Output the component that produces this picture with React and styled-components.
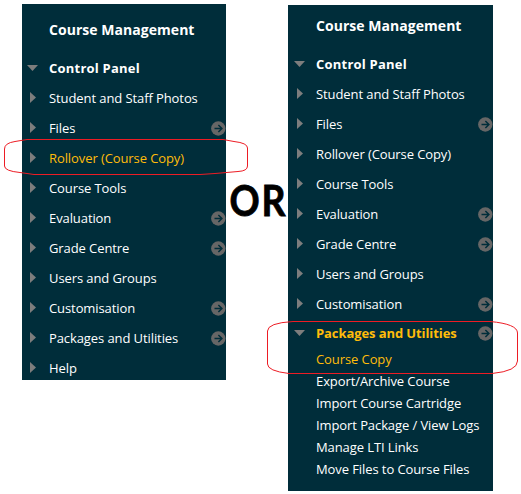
import React from 'react';
import styled, { createGlobalStyle } from 'styled-components';

const GlobalStyle = createGlobalStyle`
  body {
    margin: 0;
    background-color: #fff;
  }
`;

const AppContainer = styled.div`
  position: relative;
  box-sizing: border-box;
  width: 521px;
  height: 494px;
  padding: 4px 0 0 22px;
  display: flex;
  align-items: flex-start;
  overflow: hidden;
  font-family: 'Open Sans', 'Noto Sans', sans-serif;
`;

const Panel = styled.nav`
  box-sizing: border-box;
  flex: none;
  width: ${(props) => props.$width}px;
  height: ${(props) => props.$height}px;
  margin-top: ${(props) => props.$top || 0}px;
  padding-left: ${(props) => props.$indent}px;
  background-color: #002d3a;
  color: #fff;
  overflow: hidden;
`;

const PanelTitle = styled.h2`
  height: ${(props) => props.$height}px;
  margin: 0 0 0 22px;
  padding-bottom: 13px;
  box-sizing: border-box;
  display: flex;
  align-items: flex-end;
  font-size: 14px;
  font-weight: 700;
  letter-spacing: 0.04px;
  line-height: 20px;
  white-space: nowrap;
`;

const MenuRow = styled.div`
  height: ${(props) => props.$height || 30}px;
  display: flex;
  align-items: center;
  color: ${(props) => (props.$active ? '#ffbc0a' : '#fff')};
  font-size: 13px;
  font-weight: ${(props) => (props.$bold ? 700 : 400)};
  letter-spacing: ${(props) => props.$spacing ?? -0.09}px;
`;

const ArrowBox = styled.span`
  width: 22px;
  height: 12px;
  flex: none;
  display: flex;
  align-items: center;
`;

const Label = styled.span`
  flex: 1;
  line-height: 18px;
  white-space: nowrap;
`;

const SubList = styled.ul`
  list-style: none;
  margin: 0;
  padding: 1px 0 0 22px;
`;

const SubItem = styled.li`
  height: 22px;
  line-height: 22px;
  font-size: 13px;
  letter-spacing: -0.09px;
  white-space: nowrap;
  color: ${(props) => (props.$active ? '#ffbc0a' : '#fff')};
`;

const OrBox = styled.div`
  flex: none;
  width: 62px;
  padding-top: 166px;
  display: flex;
  justify-content: center;
`;

const OrText = styled.span`
  color: #000;
  font-family: Lato, sans-serif;
  font-size: 42px;
  font-weight: 700;
  letter-spacing: 2px;
  margin-right: -2px;
  line-height: 60px;
  transform: scaleX(0.89);
  -webkit-text-stroke: 0.8px #000;
`;

const Marks = styled.svg`
  position: absolute;
  left: 0;
  top: 0;
  pointer-events: none;
`;

const Arrow = ({ open }) => (
  <ArrowBox>
    <svg width='13' height='12' viewBox='0 0 13 12' fill='#7d7d7d'>
      {open ? <path d='M0 3h11L5.5 9z' /> : <path d='M3 0v11L9 5.5z' />}
    </svg>
  </ArrowBox>
);

const GoIcon = () => (
  <svg width='15' height='15' viewBox='0 0 15 15' fill='none'>
    <circle cx='7.3' cy='7.5' r='7.2' fill='#666' />
    <path d='M3.5 7.5H10.8M7.4 4L10.9 7.5L7.4 11' stroke='#002d3a' strokeWidth='1.5' />
  </svg>
);

const menuItems = [
  { name: 'Student and Staff Photos' },
  { name: 'Files', go: true },
  { name: 'Rollover (Course Copy)' },
  { name: 'Course Tools' },
  { name: 'Evaluation', go: true },
  { name: 'Grade Centre', go: true },
  { name: 'Users and Groups' },
  { name: 'Customisation', go: true },
];

const packageItems = [
  'Export/Archive Course',
  'Import Course Cartridge',
  'Import Package / View Logs',
  'Manage LTI Links',
  'Move Files to Course Files',
];

const MenuItem = ({ name, go, open, bold, active, height, spacing }) => (
  <MenuRow $bold={bold} $active={active} $height={height} $spacing={spacing}>
    <Arrow open={open} />
    <Label>{name}</Label>
    {go && <GoIcon />}
  </MenuRow>
);

const App = () => {
  return (
    <AppContainer>
      <GlobalStyle />
      <Panel $width={204} $height={376} $indent={5}>
        <PanelTitle $height={49}>Course Management</PanelTitle>
        <MenuItem name='Control Panel' open bold spacing={0.22} />
        {menuItems.map((item) => (
          <MenuItem key={item.name} {...item} active={item.name.startsWith('Rollover')} />
        ))}
        <MenuItem name='Packages and Utilities' go />
        <MenuItem name='Help' />
      </Panel>
      <OrBox>
        <OrText>OR</OrText>
      </OrBox>
      <Panel $width={205} $height={486} $top={1} $indent={6}>
        <PanelTitle $height={44}>Course Management</PanelTitle>
        <MenuItem name='Control Panel' open bold spacing={0.22} />
        {menuItems.map((item) => (
          <MenuItem key={item.name} {...item} />
        ))}
        <MenuItem name='Packages and Utilities' go open bold active height={28} spacing={-0.09} />
        <SubList>
          <SubItem $active>Course Copy</SubItem>
          {packageItems.map((name) => (
            <SubItem key={name}>{name}</SubItem>
          ))}
        </SubList>
      </Panel>
      <Marks width='521' height='494' viewBox='0 0 521 494' fill='none' stroke='#ed1c24'>
        <path d='M27 139.5H223L234 141.5Q247.5 143 247.5 148V166Q247.5 171 238 171.5L215 173.5L200 174.5H34L20 172.5Q4.5 171 4.5 166V149Q4.5 143 15 141.5Z' />
        <path d='M293 321.5H490Q517.5 324 517.5 333V361Q517.5 371 492 373.5H289Q267.5 371 267.5 364V331Q267.5 323 293 321.5Z' />
      </Marks>
    </AppContainer>
  );
};

export default App;
